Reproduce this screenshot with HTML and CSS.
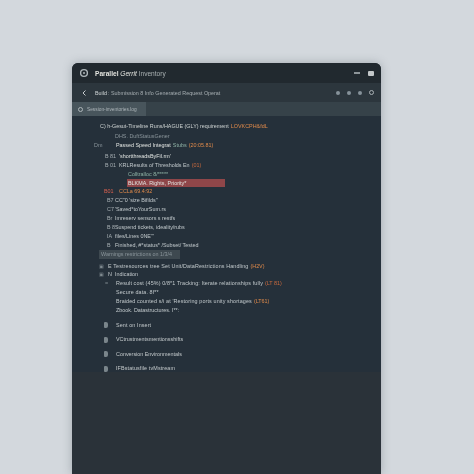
FILE: index.html
```html
<!DOCTYPE html>
<html lang="en">
<head>
    <meta charset="UTF-8">
    <meta name="viewport" content="width=device-width, initial-scale=1.0">
    <title>Parallel Gerrit Inventory</title>
    <link rel="stylesheet" href="styles.css">
</head>
<body>
    <div class="window">
        <div class="title-bar">
            <svg class="icon" viewBox="0 0 10 10"><circle cx="5" cy="5" r="3.4" fill="none" stroke="#aeb6ba" stroke-width="1.4"/><circle cx="5" cy="5" r="1" fill="#aeb6ba"/></svg>
            <span class="title-text"><b>Parallel</b> <i>Gerrit</i> <span class="dim">Inventory</span></span>
            <span class="spacer"></span>
            <span class="minimize"></span>
            <span class="maximize"></span>
        </div>
        <div class="toolbar">
            <svg class="icon back" viewBox="0 0 10 10"><path d="M6.5 2.5 L4 5 L6.5 7.5" fill="none" stroke="#c4cacd" stroke-width="1"/></svg>
            <span class="crumb">Build</span>
            <span class="crumb-rest">: Submission 8 Info Generated Request Operat</span>
            <span class="spacer"></span>
            <span class="dot"></span>
            <span class="dot"></span>
            <span class="dot"></span>
            <span class="dot ring"></span>
        </div>
        <div class="tab-bar">
            <div class="tab">
                <span class="tab-dot"></span>
                <span>Session-inventories.log</span>
            </div>
        </div>
        <div class="log">
            <div class="row top"><span class="ind-a">C) h-Gesut-Timeline Runs/HAGUE (GLY) requirement</span> <span class="orange">LOVKCPH&amp;fdL</span></div>
            <div class="row second"><span class="ind-c faint">DHS. DuftStatusGener</span></div>
            <div class="row"><span class="tag faint">Dm</span><span class="bright">Passed Speed Integrat</span> <span class="teal">Stubs</span> <span class="orange">(20:05.81)</span></div>
            <div class="row gap"><span class="gut">B 81</span><span class="bright">'shortthreadsByFil.rm'</span></div>
            <div class="row"><span class="gut">B 01</span><span>KRLResults of Thresholds En</span> <span class="rust">(01)</span></div>
            <div class="row"><span class="ind-d teal">Colltralloc 8/*****</span></div>
            <div class="row flagged"><span class="ind-d bright">BLKMA. Rights, Priority*</span></div>
            <div class="row"><span class="gut red">B01</span><span class="orange">CCLa 69.4:92</span></div>
            <div class="row"><span class="gut tight">B7</span><span>CC"0 'size Bifilds"</span></div>
            <div class="row"><span class="gut tight">C7</span><span>'Saved*toYourSum.rs</span></div>
            <div class="row"><span class="gut tight">Br</span><span>Imreserv sensors s restfs</span></div>
            <div class="row"><span class="gut tight">B 8</span><span>Suspend tickets, ideality/rubs</span></div>
            <div class="row"><span class="gut tight">IA</span><span>files/Lines 0NE'"</span></div>
            <div class="row"><span class="gut tight">B</span><span>Finished, #*status* /Subset/ Tested</span></div>
            <div class="row selected"><span class="faint">Warnings restrictions on 1/3/4</span></div>
            <div class="row section"><span class="mark">&#9635;</span><span class="wide">E Testresources tree Set Unit/DataRestrictions Handling</span><span class="orange">(H2V)</span></div>
            <div class="row"><span class="mark">&#9635;</span><span class="small-gap">N</span><span>Indication</span></div>
            <div class="row"><span class="sub">=</span><span class="wide">Result cost (45%) 0/8*1 Tracking: Iterate relationships fully</span> <span class="rust">(LT 81)</span></div>
            <div class="row"><span class="sub"></span><span class="wide">Secure data. 8f**</span></div>
            <div class="row"><span class="sub"></span><span class="wide">Braided counted s/i at 'Restoring ports unity shortages</span> <span class="orange">(LT61)</span></div>
            <div class="row"><span class="sub"></span><span>Zbook. Datastructures. I**:</span></div>
            <div class="row file first-file"><span class="doc"></span><span class="wide">Sent on Insert</span></div>
            <div class="row file"><span class="doc"></span><span>VCtrustmentsmentionsshifts</span></div>
            <div class="row file"><span class="doc"></span><span>Conversion Environmentals</span></div>
            <div class="row file"><span class="doc"></span><span class="wide">IFBstatusfile tvMstream</span></div>
        </div>
        <div class="footer"></div>
    </div>
</body>
</html>
```

FILE: styles.css
```css
body, html {
    margin: 0;
    padding: 0;
    height: 100%;
    overflow: hidden;
    font-family: "Liberation Sans", Arial, sans-serif;
    background-color: #d3d8dd;
}
body {
    padding: 63px 93px 0 72px;
    box-sizing: border-box;
    height: 474px;
}
.window {
    height: 411px;
    display: flex;
    flex-direction: column;
    border-radius: 6px 6px 0 0;
    overflow: hidden;
    background-color: #2a3239;
    box-shadow: 0 0 10px rgba(70, 80, 90, 0.35);
    color: #c2c9cc;
    font-size: 5.4px;
    filter: blur(0.35px);
}
.title-bar {
    height: 20px;
    display: flex;
    align-items: center;
    padding: 0 7px;
    background-color: #21292f;
}
.icon {
    width: 10px;
    height: 10px;
    flex: none;
}
.title-text {
    margin-left: 6px;
    font-size: 6.6px;
    color: #e3e4df;
}
.title-text .dim {
    color: #a9b0b2;
}
.spacer {
    flex: auto;
}
.minimize {
    width: 6px;
    height: 2px;
    background-color: #8d9599;
    margin-right: 8px;
}
.maximize {
    width: 6px;
    height: 5px;
    border-radius: 1px;
    background-color: #c3c8ca;
}
.toolbar {
    height: 19px;
    display: flex;
    align-items: center;
    padding: 0 7px;
    background-color: #2c363d;
}
.back {
    margin-right: 6px;
}
.crumb {
    color: #d0d5d6;
}
.crumb-rest {
    margin-left: 1px;
    color: #a6aeb2;
}
.dot {
    width: 4px;
    height: 4px;
    border-radius: 50%;
    background-color: #86929a;
    margin-left: 7px;
}
.dot.ring {
    background-color: #2c363d;
    border: 1.2px solid #a9b1b5;
    width: 3px;
    height: 3px;
}
.tab-bar {
    height: 14px;
    background-color: #364249;
}
.tab {
    width: 74px;
    height: 14px;
    box-sizing: border-box;
    padding-left: 6px;
    display: flex;
    align-items: center;
    gap: 4px;
    background-color: #48555c;
    color: #aeb6ba;
    font-size: 4.8px;
    white-space: nowrap;
    overflow: hidden;
}
.tab-dot {
    width: 3px;
    height: 3px;
    border-radius: 50%;
    border: 0.8px solid #aeb6ba;
    flex: none;
}
.log {
    height: 256px;
    box-sizing: border-box;
    padding: 5px 0 0 27px;
    background-color: #25303a;
    overflow: hidden;
}
.row {
    height: 8.9px;
    line-height: 8.9px;
    display: flex;
    gap: 2px;
    white-space: nowrap;
}
.row.top {
    height: 10px;
    line-height: 10px;
    color: #cfd4d3;
}
.second {
    height: 10px;
    line-height: 10px;
}
.gap {
    margin-top: 2px;
}
.ind-a {
    padding-left: 1px;
}
.ind-c {
    padding-left: 16px;
}
.ind-d {
    padding-left: 29px;
}
.tag {
    width: 20px;
    margin-left: -5px;
    flex: none;
}
.gut {
    width: 12px;
    margin-left: 6px;
    flex: none;
    color: #a6aeb2;
}
.gut.tight {
    width: 6px;
    margin-left: 8px;
}
.gut.red {
    margin-left: 5px;
    width: 13px;
    color: #d9604f;
}
.flagged {
    background: linear-gradient(#8f4649, #8f4649) no-repeat 28px 0 / 98px 100%;
}
.selected {
    width: 81px;
    background-color: #3e4950;
    padding-left: 2px;
    box-sizing: border-box;
    overflow: hidden;
}
.section {
    margin-top: 3px;
}
.mark {
    width: 7px;
    flex: none;
    color: #7f8a90;
}
.small-gap {
    width: 5px;
}
.sub {
    width: 15px;
    flex: none;
    text-align: center;
    color: #7f8a90;
}
.wide {
    letter-spacing: 0.12px;
}
.file {
    height: 14.5px;
    line-height: 14.5px;
    padding-left: 5px;
    gap: 8px;
    align-items: center;
    color: #c4cacc;
}
.first-file {
    margin-top: 3px;
}
.doc {
    width: 4px;
    height: 6px;
    flex: none;
    background-color: #7a858b;
    border-radius: 1px 2px 2px 1px;
}
.bright {
    color: #e1e4e1;
}
.faint {
    color: #8a959b;
}
.teal {
    color: #8fb3a6;
}
.orange {
    color: #e08a4a;
}
.rust {
    color: #c96a3e;
}
.footer {
    flex: auto;
    background-color: #2a3239;
}
```
